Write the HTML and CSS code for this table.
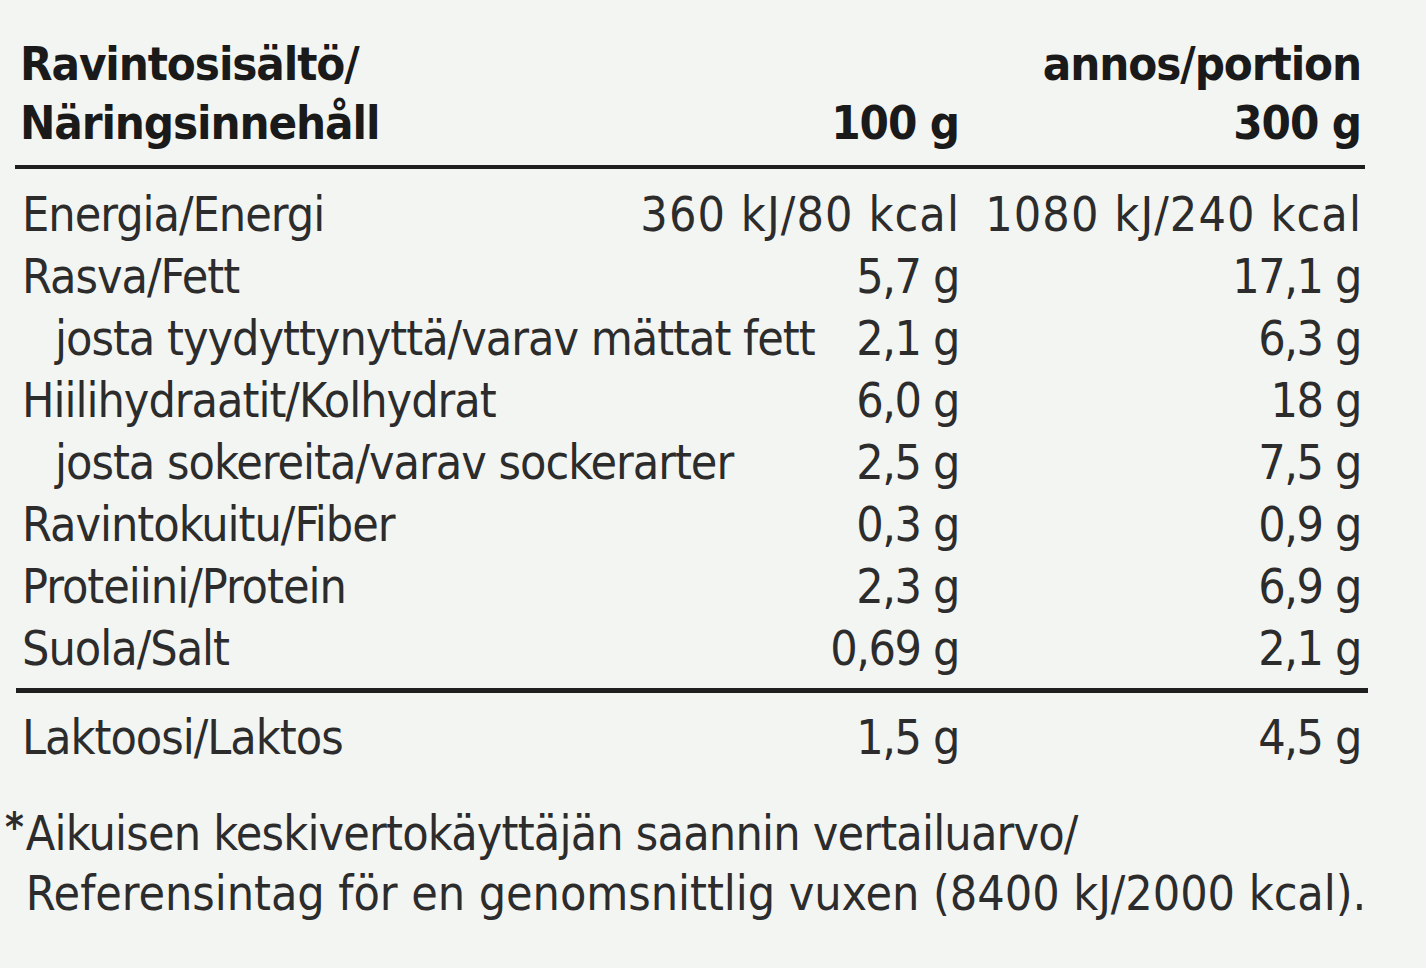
FILE: index.html
```html
<!DOCTYPE html>
<html lang="fi">
<head>
<meta charset="utf-8">
<title>Ravintosisältö</title>
<link rel="stylesheet" href="styles.css">
</head>
<body>
<div class="label">
  <div class="head">
    <div class="head-title">Ravintosisältö/<br>Näringsinnehåll</div>
    <div class="head-col"><span>100 g</span></div>
    <div class="head-col"><span>annos/portion</span><span>300 g</span></div>
  </div>
  <div class="rule rule1"></div>
  <div class="rows">
    <div class="row energy"><span class="name">Energia/Energi</span><span class="val">360 kJ/80 kcal</span><span class="val">1080 kJ/240 kcal</span></div>
    <div class="row"><span class="name">Rasva/Fett</span><span class="val">5,7 g</span><span class="val">17,1 g</span></div>
    <div class="row sub"><span class="name">josta tyydyttynyttä/varav mättat fett</span><span class="val">2,1 g</span><span class="val">6,3 g</span></div>
    <div class="row"><span class="name">Hiilihydraatit/Kolhydrat</span><span class="val">6,0 g</span><span class="val">18 g</span></div>
    <div class="row sub"><span class="name">josta sokereita/varav sockerarter</span><span class="val">2,5 g</span><span class="val">7,5 g</span></div>
    <div class="row"><span class="name">Ravintokuitu/Fiber</span><span class="val">0,3 g</span><span class="val">0,9 g</span></div>
    <div class="row"><span class="name">Proteiini/Protein</span><span class="val">2,3 g</span><span class="val">6,9 g</span></div>
    <div class="row"><span class="name">Suola/Salt</span><span class="val">0,69 g</span><span class="val">2,1 g</span></div>
  </div>
  <div class="rule rule2"></div>
  <div class="rows rows2">
    <div class="row"><span class="name">Laktoosi/Laktos</span><span class="val">1,5 g</span><span class="val">4,5 g</span></div>
  </div>
  <div class="note">
    <span class="star">*</span>
    <div class="note-text">
      <span class="note-line1">Aikuisen keskivertokäyttäjän saannin vertailuarvo/</span>
      <span class="note-line2">Referensintag för en genomsnittlig vuxen (8400 kJ/2000 kcal).</span>
    </div>
  </div>
</div>
</body>
</html>
```
FILE: styles.css
```css
html, body {
  margin: 0;
  padding: 0;
  background: #f3f5f2;
}
body {
  width: 1426px;
  height: 968px;
  overflow: hidden;
  font-family: "DejaVu Sans Condensed", "DejaVu Sans", "Liberation Sans", sans-serif;
  color: #2c2c2c;
}
.label {
  margin-left: 20px;
  width: 1341px;
  padding-top: 34px;
}
.head {
  display: grid;
  grid-template-columns: minmax(0, 1fr) 330px 402px;
  align-items: end;
  font-weight: bold;
  color: #1a1a1a;
  font-size: 47px;
  line-height: 59px;
  letter-spacing: -1.1px;
  white-space: nowrap;
}
.head-col {
  display: flex;
  flex-direction: column;
  align-items: flex-end;
}
.rule {
  height: 4px;
  background: #1f1f1f;
}
.rule1 {
  margin: 13px -4px 0 -5px;
}
.rule2 {
  height: 5px;
  margin: 9px -7px 0 -4px;
}
.rows {
  padding-top: 14px;
}
.rows2 {
  padding-top: 13px;
}
.row {
  display: grid;
  grid-template-columns: minmax(0, 1fr) 330px 402px;
  font-size: 48px;
  line-height: 62px;
  height: 62px;
  white-space: nowrap;
}
.name {
  padding-left: 2px;
  letter-spacing: -1px;
}
.row.sub .name {
  padding-left: 35px;
}
.val {
  text-align: right;
  letter-spacing: -1.4px;
}
.energy .val {
  letter-spacing: 1.1px;
  margin-right: -1px;
}
.note {
  display: flex;
  margin-top: 35px;
  margin-left: -13px;
  font-size: 48px;
  line-height: 60px;
  white-space: nowrap;
}
.star {
  font-size: 40px;
  line-height: 40px;
  font-weight: bold;
  width: 23px;
  padding-top: 4px;
  margin-left: -2px;
  margin-right: 2px;
}
.note-text {
  display: flex;
  flex-direction: column;
}
.note-line1 {
  letter-spacing: -0.8px;
}
.note-line2 {
  letter-spacing: -0.05px;
}
```
